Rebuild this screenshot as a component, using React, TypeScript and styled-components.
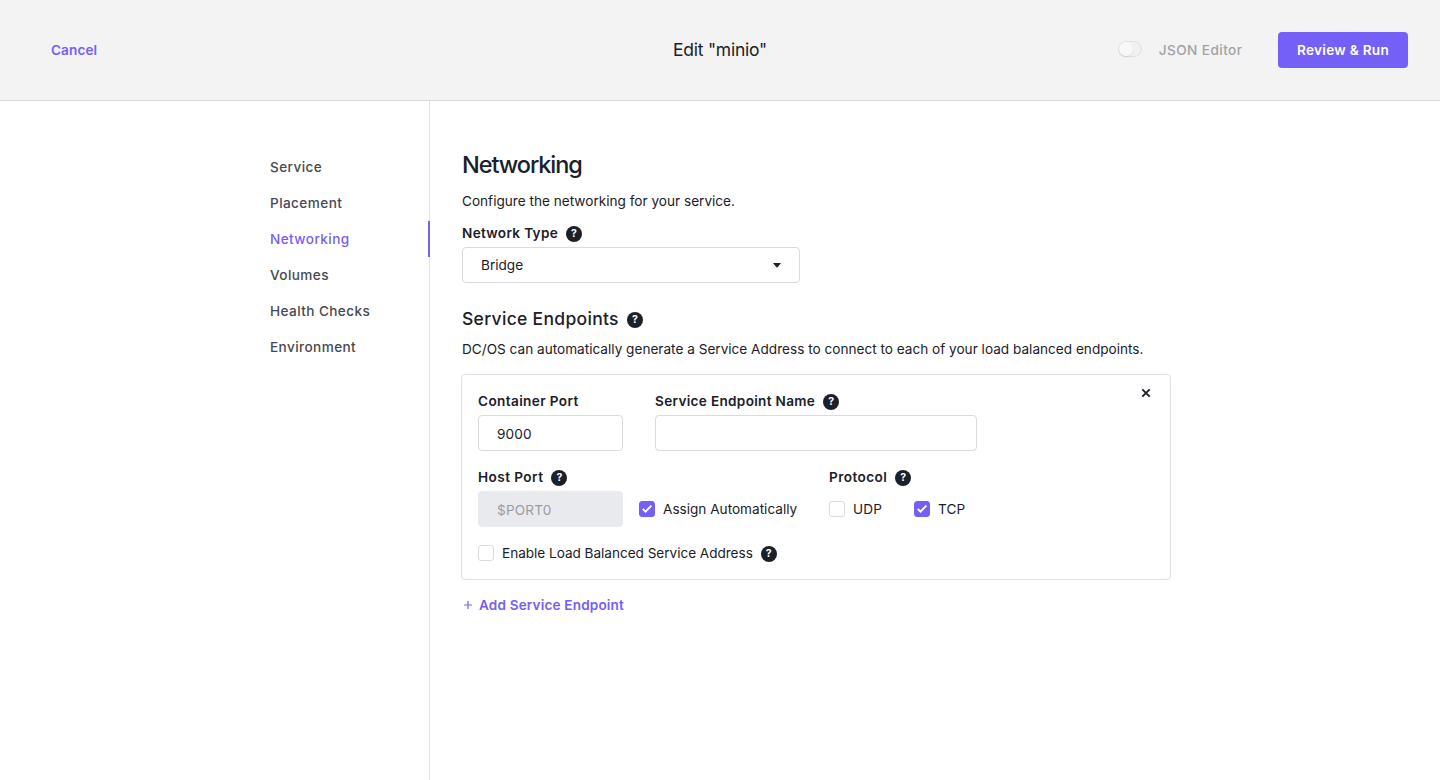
import React from "react";
import styled, { createGlobalStyle } from "styled-components";

const purple = "#7560f7";
const ink = "#1b2029";
const line = "#dadae0";

const GlobalStyle = createGlobalStyle`
  *, *::before, *::after { box-sizing: border-box; }
  html, body { margin: 0; background: #fff; }
  body, button {
    font-family: Inter, "Liberation Sans", sans-serif;
    font-size: 13.6px;
    line-height: 20px;
    color: ${ink};
    -webkit-font-smoothing: antialiased;
  }
`;

const Page = styled.div`
  display: flex;
  flex-direction: column;
  height: 780px;
  overflow: hidden;
`;

const Header = styled.header`
  display: grid;
  grid-template-columns: 1fr auto 1fr;
  align-items: center;
  height: 101px;
  padding: 0 32px 1px 51px;
  background: #f3f3f3;
  border-bottom: 1px solid #d8d8db;
`;

const LinkButton = styled.button`
  display: inline-flex;
  align-items: center;
  padding: 0;
  border: 0;
  background: none;
  color: ${purple};
  font-weight: 600;
  letter-spacing: 0.15px;
  cursor: pointer;
`;

const Cancel = styled(LinkButton)`
  justify-self: start;
  letter-spacing: 0.1px;
`;

const Title = styled.h1`
  margin: 0 0 0 -19px;
  font-size: 17.5px;
  font-weight: 400;
  line-height: 24px;
  letter-spacing: -0.25px;
`;

const HeaderActions = styled.div`
  display: flex;
  align-items: center;
  justify-self: end;
`;

const ToggleTrack = styled.span`
  width: 24px;
  height: 16px;
  margin: -2px 17px 0 0;
  border: 1px solid #e1e1e3;
  border-radius: 8px;
  background: #f1f1f1;
`;

const ToggleKnob = styled.span`
  display: block;
  width: 14px;
  height: 14px;
  border-radius: 50%;
  background: #f8f8f8;
  box-shadow: 0 1px 2px rgba(0, 0, 0, 0.1);
`;

const ToggleLabel = styled.span`
  margin-right: 35.5px;
  color: #a1a2a5;
  font-weight: 500;
  letter-spacing: 0.45px;
`;

const PrimaryButton = styled.button`
  width: 130px;
  height: 36px;
  padding: 0;
  border: 0;
  border-radius: 4px;
  background: ${purple};
  color: #fff;
  font-weight: 600;
  letter-spacing: 0.28px;
  cursor: pointer;
`;

const Body = styled.div`
  display: flex;
  flex: 1;
`;

const Sidebar = styled.nav`
  width: 430px;
  padding: 48px 0 0 270px;
  border-right: 1px solid #e2e2e6;
`;

const NavItem = styled.a<{ $active?: boolean }>`
  display: block;
  height: 36px;
  margin-right: -1px;
  border-right: 2px solid ${(p) => (p.$active ? purple : "transparent")};
  color: ${(p) => (p.$active ? purple : "#464951")};
  font-weight: 500;
  line-height: 36px;
  letter-spacing: 0.41px;
`;

const Content = styled.main`
  width: 741px;
  padding: 48px 0 0 32px;
`;

const PageHeading = styled.h2`
  margin: 0;
  font-size: 23.5px;
  font-weight: 500;
  line-height: 32px;
  letter-spacing: -1.07px;
`;

const Paragraph = styled.p<{ $top: number }>`
  margin: ${(p) => p.$top}px 0 0;
  letter-spacing: 0.004px;
`;

const Label = styled.div<{ $tracking?: number }>`
  display: flex;
  align-items: center;
  height: 20px;
  margin-bottom: 4px;
  font-weight: 600;
  letter-spacing: ${(p) => p.$tracking ?? 0.31}px;
`;

const SectionHeading = styled.h3`
  display: flex;
  align-items: center;
  margin: 24px 0 0;
  font-size: 17.5px;
  font-weight: 500;
  line-height: 24px;
  letter-spacing: 0.31px;
`;

const HelpBadge = styled.span`
  display: inline-flex;
  align-items: center;
  justify-content: center;
  width: 16px;
  height: 16px;
  margin: 2px 0 0 8px;
  border-radius: 50%;
  background: ${ink};
  color: #fff;
  font-size: 10.5px;
  font-weight: 700;
  line-height: 16px;
  letter-spacing: 0;
`;

const Help = () => <HelpBadge>?</HelpBadge>;

const FieldGroup = styled.div<{ $width?: number; $top?: number }>`
  width: ${(p) => (p.$width ? `${p.$width}px` : "auto")};
  margin-top: ${(p) => p.$top ?? 0}px;
`;

const Control = styled.div<{ $disabled?: boolean }>`
  display: flex;
  align-items: center;
  justify-content: space-between;
  height: 36px;
  padding: 1px 18px 0;
  border: 1px solid ${(p) => (p.$disabled ? "#e9eaee" : line)};
  border-radius: 4px;
  background: ${(p) => (p.$disabled ? "#e9eaee" : "#fff")};
  color: ${(p) => (p.$disabled ? "#9b9ca2" : ink)};
  letter-spacing: ${(p) => (p.$disabled ? 0.18 : 0.12)}px;
`;

const SelectControl = styled(Control)`
  padding-top: 0;
  letter-spacing: 0;
`;

const Card = styled.section`
  width: 710px;
  height: 206px;
  margin: 15px 0 0 -1px;
  padding: 16px;
  border: 1px solid #e0e0e4;
  border-radius: 4px;
`;

const EndpointRow = styled.div`
  display: flex;
  align-items: flex-start;
  gap: 32px;
  margin-bottom: 16px;
`;

const PortRow = styled(EndpointRow)`
  gap: 16px;
`;

const CloseButton = styled.button`
  display: flex;
  margin: -3px 3px 0 auto;
  padding: 0;
  border: 0;
  background: none;
  cursor: pointer;
`;

const CheckLabel = styled.label<{ $tracking?: number }>`
  display: inline-flex;
  align-items: center;
  height: 20px;
  letter-spacing: ${(p) => p.$tracking ?? 0}px;
`;

const AssignSlot = styled.div`
  width: 174px;
  padding-top: 32px;
`;

const ProtocolOptions = styled.div`
  display: flex;
  gap: 32px;
  padding-top: 8px;
`;

const CheckBoxFrame = styled.span<{ $checked?: boolean }>`
  display: flex;
  width: 16px;
  height: 16px;
  margin-right: 8px;
  border: 1px solid ${(p) => (p.$checked ? purple : line)};
  border-radius: 3px;
  background: ${(p) => (p.$checked ? purple : "#fff")};
`;

const CheckBox = ({ checked }: { checked?: boolean }) => (
  <CheckBoxFrame $checked={checked}>
    {checked && (
      <svg width="14" height="14" viewBox="0 0 14 14" fill="none">
        <path d="M2.7 6.9L5.5 9.6L11.4 3.6" stroke="#fff" strokeWidth="1.9" />
      </svg>
    )}
  </CheckBoxFrame>
);

const AddButton = styled(LinkButton)`
  display: flex;
  gap: 7px;
  margin: 15px 0 0 2px;
`;

const navItems = ["Service", "Placement", "Networking", "Volumes", "Health Checks", "Environment"];

export default function App() {
  return (
    <Page>
      <GlobalStyle />
      <Header>
        <Cancel>Cancel</Cancel>
        <Title>Edit "minio"</Title>
        <HeaderActions>
          <ToggleTrack><ToggleKnob /></ToggleTrack>
          <ToggleLabel>JSON Editor</ToggleLabel>
          <PrimaryButton>Review &amp; Run</PrimaryButton>
        </HeaderActions>
      </Header>
      <Body>
        <Sidebar>
          {navItems.map((item) => (
            <NavItem key={item} $active={item === "Networking"}>{item}</NavItem>
          ))}
        </Sidebar>
        <Content>
          <PageHeading>Networking</PageHeading>
          <Paragraph $top={10}>Configure the networking for your service.</Paragraph>
          <FieldGroup $width={338} $top={12}>
            <Label>Network Type<Help /></Label>
            <SelectControl>
              Bridge
              <svg width="8" height="6" viewBox="0 0 8 6">
                <path d="M0.6 0.9H7.4Q8.2 1 7.7 1.6L4.5 5.3Q4 5.8 3.5 5.3L0.3 1.6Q-0.2 1 0.6 0.9Z" fill={ink} />
              </svg>
            </SelectControl>
          </FieldGroup>
          <SectionHeading>Service Endpoints<Help /></SectionHeading>
          <Paragraph $top={8}>
            DC/OS can automatically generate a Service Address to connect to each of your load balanced endpoints.
          </Paragraph>
          <Card>
            <EndpointRow>
              <FieldGroup $width={145}>
                <Label $tracking={0.37}>Container Port</Label>
                <Control>9000</Control>
              </FieldGroup>
              <FieldGroup $width={322}>
                <Label>Service Endpoint Name<Help /></Label>
                <Control />
              </FieldGroup>
              <CloseButton aria-label="Remove">
                <svg width="10" height="10" viewBox="0 0 10 10">
                  <path d="M1.3 1.3L8.7 8.7M8.7 1.3L1.3 8.7" stroke={ink} strokeWidth="1.9" />
                </svg>
              </CloseButton>
            </EndpointRow>
            <PortRow>
              <FieldGroup $width={145}>
                <Label $tracking={0.43}>Host Port<Help /></Label>
                <Control $disabled>$PORT0</Control>
              </FieldGroup>
              <AssignSlot>
                <CheckLabel><CheckBox checked />Assign Automatically</CheckLabel>
              </AssignSlot>
              <FieldGroup>
                <Label $tracking={0.43}>Protocol<Help /></Label>
                <ProtocolOptions>
                  <CheckLabel $tracking={0.1}><CheckBox />UDP</CheckLabel>
                  <CheckLabel $tracking={0.1}><CheckBox checked />TCP</CheckLabel>
                </ProtocolOptions>
              </FieldGroup>
            </PortRow>
            <CheckLabel $tracking={-0.03}><CheckBox />Enable Load Balanced Service Address<Help /></CheckLabel>
          </Card>
          <AddButton>
            <svg width="8" height="8" viewBox="0 0 8 8">
              <path d="M4 0V8M0 4H8" stroke={purple} strokeWidth="1.2" />
            </svg>
            Add Service Endpoint
          </AddButton>
        </Content>
      </Body>
    </Page>
  );
}
